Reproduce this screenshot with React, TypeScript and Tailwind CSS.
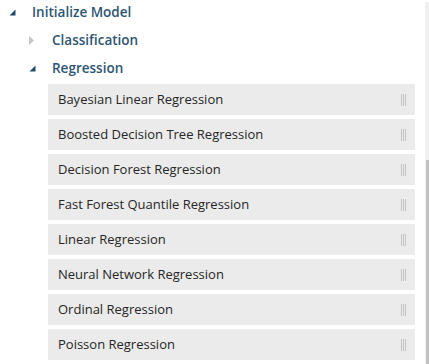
const items = [
  "Bayesian Linear Regression",
  "Boosted Decision Tree Regression",
  "Decision Forest Regression",
  "Fast Forest Quantile Regression",
  "Linear Regression",
  "Neural Network Regression",
  "Ordinal Regression",
  "Poisson Regression",
];

function Grip() {
  return (
    <div className="flex gap-[1px] h-[12px]">
      <span className="w-[1px] h-full bg-[#c4c4c4]" />
      <span className="w-[1px] h-full bg-[#c4c4c4]" />
      <span className="w-[1px] h-full bg-[#c4c4c4]" />
    </div>
  );
}

export default function App() {
  return (
    <div className="w-[429px] h-[364px] overflow-hidden bg-white flex font-['Open_Sans',sans-serif]">
      <div className="flex-1 flex flex-col">
        {/* top level */}
        <div className="h-[24px] flex items-center">
          <svg width="7" height="7" viewBox="0 0 7 7" className="ml-[9px] mt-[1px]">
            <path d="M6.5 0.5 L6.5 6.5 L0.5 6.5 Z" fill="#1f4b68" />
          </svg>
          <span className="ml-[16px] text-[13.5px] font-semibold text-[#2e5574]">Initialize Model</span>
        </div>
        <div className="mt-[2px] h-[28px] flex items-center">
          <svg width="6" height="9" viewBox="0 0 6 9" className="ml-[29px]">
            <path d="M0 0 L5 4.5 L0 9 Z" fill="#c6c6c6" />
          </svg>
          <span className="ml-[17px] text-[13.5px] font-semibold text-[#2e5574]">Classification</span>
        </div>
        <div className="h-[28px] flex items-center">
          <svg width="7" height="7" viewBox="0 0 7 7" className="ml-[29px] mt-[1px]">
            <path d="M6.5 0.5 L6.5 6.5 L0.5 6.5 Z" fill="#1f4b68" />
          </svg>
          <span className="ml-[16px] text-[13.5px] font-semibold text-[#2e5574]">Regression</span>
        </div>
        {/* leaf modules */}
        <div className="mt-[2px] ml-[48px] mr-[10px] flex flex-col gap-[4px]">
          {items.map((name) => (
            <div key={name} className="h-[31px] bg-[#ebebeb] flex items-center justify-between pl-[10px] pr-[9px]">
              <span className="text-[13px] text-[#262626]">{name}</span>
              <Grip />
            </div>
          ))}
        </div>
      </div>
      {/* scrollbar */}
      <div className="w-[4px] mt-[2px] bg-[#f0f0f0] flex flex-col">
        <div className="mt-[158px] flex-1 ml-[1px] bg-[#c2c2c2]" />
      </div>
    </div>
  );
}
